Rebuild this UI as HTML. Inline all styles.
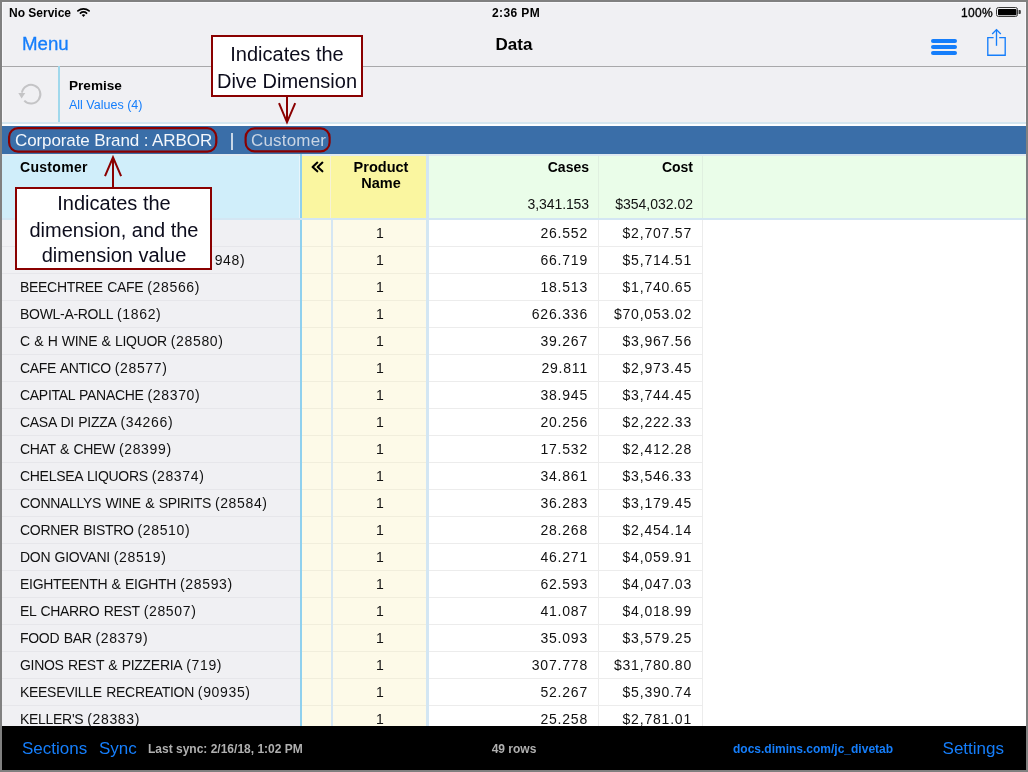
<!DOCTYPE html>
<html><head><meta charset="utf-8"><style>
html,body{margin:0;padding:0;}
body{width:1028px;height:772px;position:relative;overflow:hidden;background:#808080;font-family:"Liberation Sans",sans-serif;}
.t{position:absolute;white-space:nowrap;will-change:transform;}
.r{position:absolute;}
svg{position:absolute;left:0;top:0;}
</style></head><body>
<div class="r" style="left:2px;top:2px;width:1024px;height:768px;background:#f0f0f3;"></div>
<div class="r" style="left:2px;top:2px;width:1024px;height:1px;background:#f8f8fb;"></div>
<div class="r" style="left:2px;top:2px;width:1px;height:768px;background:#f8f8fb;"></div>
<div class="r" style="left:1025px;top:2px;width:1px;height:768px;background:#f8f8fb;"></div>
<div class="t" style="top:7px;font-size:12px;line-height:12px;font-weight:700;color:#000;left:9px;">No Service</div>
<div class="t" style="top:7px;font-size:12px;line-height:12px;font-weight:700;color:#000;letter-spacing:0.4px;left:15.5px;width:1000px;text-align:center;">2:36 PM</div>
<div class="t" style="top:7px;font-size:12px;line-height:12px;font-weight:400;color:#000;letter-spacing:0.3px;left:-7.5px;width:1000px;text-align:right;-webkit-text-stroke:0.35px #000;">100%</div>
<div class="t" style="top:35px;font-size:18.7px;line-height:18.7px;font-weight:400;color:#157efb;left:22px;-webkit-text-stroke:0.3px #157efb;">Menu</div>
<div class="t" style="top:36px;font-size:17px;line-height:17px;font-weight:700;color:#000;left:13.5px;width:1000px;text-align:center;">Data</div>
<div class="r" style="left:2px;top:66px;width:1024px;height:1px;background:#a8a8aa;"></div>
<div class="r" style="left:58px;top:66px;width:2px;height:56px;background:#a0d8ec;"></div>
<div class="t" style="top:79px;font-size:13.6px;line-height:13.6px;font-weight:700;color:#000;left:69px;">Premise</div>
<div class="t" style="top:99px;font-size:12.5px;line-height:12.5px;font-weight:400;color:#157efb;left:69px;">All Values (4)</div>
<div class="r" style="left:2px;top:122px;width:1024px;height:2px;background:#d4e6f0;"></div>
<div class="r" style="left:2px;top:124px;width:1024px;height:2px;background:#fdfeff;"></div>
<div class="r" style="left:2px;top:126px;width:1024px;height:28px;background:#3a6ea8;"></div>
<div class="t" style="top:132px;font-size:17px;line-height:17px;font-weight:400;color:#f4f7fb;letter-spacing:-0.1px;left:15px;">Corporate Brand : ARBOR</div>
<div class="r" style="left:231px;top:133px;width:2px;height:17px;background:#c8d6e6;"></div>
<div class="t" style="top:132px;font-size:17px;line-height:17px;font-weight:400;color:#c9d5e4;letter-spacing:0.18px;left:251px;">Customer</div>
<div class="r" style="left:2px;top:154px;width:1024px;height:2px;background:#dfeaf1;"></div>
<div class="r" style="left:2px;top:156px;width:297px;height:62px;background:#d0eefa;"></div>
<div class="r" style="left:299px;top:156px;width:1px;height:62px;background:#e8f4fa;"></div>
<div class="r" style="left:300px;top:154px;width:2px;height:572px;background:#8fd0ee;"></div>
<div class="r" style="left:302px;top:156px;width:28px;height:62px;background:#faf6a0;"></div>
<div class="r" style="left:330px;top:156px;width:1px;height:62px;background:#f6f3d6;"></div>
<div class="r" style="left:331px;top:156px;width:95px;height:62px;background:#faf6a0;"></div>
<div class="r" style="left:426px;top:154px;width:3px;height:572px;background:#d3e6f3;"></div>
<div class="r" style="left:429px;top:156px;width:597px;height:62px;background:#eafde9;"></div>
<div class="r" style="left:598px;top:156px;width:1px;height:62px;background:#e0f0e0;"></div>
<div class="r" style="left:702px;top:156px;width:1px;height:62px;background:#e0f0e0;"></div>
<div class="r" style="left:2px;top:218px;width:1024px;height:2px;background:#d3e6f3;"></div>
<div class="t" style="top:160px;font-size:14px;line-height:14px;font-weight:700;color:#000;letter-spacing:0.3px;left:20px;">Customer</div>
<div class="t" style="top:160px;font-size:14.5px;line-height:14.5px;font-weight:700;color:#000;left:-119.5px;width:1000px;text-align:center;">Product</div>
<div class="t" style="top:176px;font-size:14.5px;line-height:14.5px;font-weight:700;color:#000;left:-119.5px;width:1000px;text-align:center;">Name</div>
<div class="t" style="top:160px;font-size:14px;line-height:14px;font-weight:700;color:#000;left:-411.5px;width:1000px;text-align:right;">Cases</div>
<div class="t" style="top:160px;font-size:14px;line-height:14px;font-weight:700;color:#000;left:-307.5px;width:1000px;text-align:right;">Cost</div>
<div class="t" style="top:197px;font-size:14px;line-height:14px;font-weight:400;color:#111;letter-spacing:-0.1px;left:-411.5px;width:1000px;text-align:right;">3,341.153</div>
<div class="t" style="top:197px;font-size:14px;line-height:14px;font-weight:400;color:#111;left:-307.5px;width:1000px;text-align:right;">$354,032.02</div>
<div class="r" style="left:2px;top:220px;width:298px;height:506px;background:#f0f0f3;"></div>
<div class="r" style="left:302px;top:220px;width:29px;height:506px;background:#fdfae8;"></div>
<div class="r" style="left:331px;top:220px;width:2px;height:506px;background:#d5e6f3;"></div>
<div class="r" style="left:333px;top:220px;width:93px;height:506px;background:#fdfae8;"></div>
<div class="r" style="left:429px;top:220px;width:597px;height:506px;background:#ffffff;"></div>
<div class="r" style="left:598px;top:220px;width:1px;height:506px;background:#ececec;"></div>
<div class="r" style="left:702px;top:220px;width:1px;height:506px;background:#ececec;"></div>
<div class="r" style="left:2px;top:246px;width:298px;height:1px;background:#e6e6ea;"></div>
<div class="r" style="left:302px;top:246px;width:29px;height:1px;background:#f1eedc;"></div>
<div class="r" style="left:333px;top:246px;width:93px;height:1px;background:#f1eedc;"></div>
<div class="r" style="left:429px;top:246px;width:274px;height:1px;background:#ececec;"></div>
<div class="t" style="top:226px;font-size:14px;line-height:14px;font-weight:400;color:#111;left:20px;"><span style="letter-spacing:-0.3px;word-spacing:0.8px">ARBOR HILL</span> <span style="letter-spacing:0.65px">(28001)</span></div>
<div class="t" style="top:226px;font-size:14px;line-height:14px;font-weight:400;color:#111;left:-120px;width:1000px;text-align:center;">1</div>
<div class="t" style="top:226px;font-size:14px;line-height:14px;font-weight:400;color:#111;letter-spacing:0.8px;left:-412px;width:1000px;text-align:right;">26.552</div>
<div class="t" style="top:226px;font-size:14px;line-height:14px;font-weight:400;color:#111;letter-spacing:0.8px;left:-308px;width:1000px;text-align:right;">$2,707.57</div>
<div class="r" style="left:2px;top:273px;width:298px;height:1px;background:#e6e6ea;"></div>
<div class="r" style="left:302px;top:273px;width:29px;height:1px;background:#f1eedc;"></div>
<div class="r" style="left:333px;top:273px;width:93px;height:1px;background:#f1eedc;"></div>
<div class="r" style="left:429px;top:273px;width:274px;height:1px;background:#ececec;"></div>
<div class="t" style="top:253px;font-size:14px;line-height:14px;font-weight:400;color:#111;left:26px;"><span style="letter-spacing:-0.3px;word-spacing:0.8px">BAY POINT RESTAURANT</span> <span style="letter-spacing:0.65px">(2 948)</span></div>
<div class="t" style="top:253px;font-size:14px;line-height:14px;font-weight:400;color:#111;left:-120px;width:1000px;text-align:center;">1</div>
<div class="t" style="top:253px;font-size:14px;line-height:14px;font-weight:400;color:#111;letter-spacing:0.8px;left:-412px;width:1000px;text-align:right;">66.719</div>
<div class="t" style="top:253px;font-size:14px;line-height:14px;font-weight:400;color:#111;letter-spacing:0.8px;left:-308px;width:1000px;text-align:right;">$5,714.51</div>
<div class="r" style="left:2px;top:300px;width:298px;height:1px;background:#e6e6ea;"></div>
<div class="r" style="left:302px;top:300px;width:29px;height:1px;background:#f1eedc;"></div>
<div class="r" style="left:333px;top:300px;width:93px;height:1px;background:#f1eedc;"></div>
<div class="r" style="left:429px;top:300px;width:274px;height:1px;background:#ececec;"></div>
<div class="t" style="top:280px;font-size:14px;line-height:14px;font-weight:400;color:#111;left:20px;"><span style="letter-spacing:-0.3px;word-spacing:0.8px">BEECHTREE CAFE</span> <span style="letter-spacing:0.65px">(28566)</span></div>
<div class="t" style="top:280px;font-size:14px;line-height:14px;font-weight:400;color:#111;left:-120px;width:1000px;text-align:center;">1</div>
<div class="t" style="top:280px;font-size:14px;line-height:14px;font-weight:400;color:#111;letter-spacing:0.8px;left:-412px;width:1000px;text-align:right;">18.513</div>
<div class="t" style="top:280px;font-size:14px;line-height:14px;font-weight:400;color:#111;letter-spacing:0.8px;left:-308px;width:1000px;text-align:right;">$1,740.65</div>
<div class="r" style="left:2px;top:327px;width:298px;height:1px;background:#e6e6ea;"></div>
<div class="r" style="left:302px;top:327px;width:29px;height:1px;background:#f1eedc;"></div>
<div class="r" style="left:333px;top:327px;width:93px;height:1px;background:#f1eedc;"></div>
<div class="r" style="left:429px;top:327px;width:274px;height:1px;background:#ececec;"></div>
<div class="t" style="top:307px;font-size:14px;line-height:14px;font-weight:400;color:#111;left:20px;"><span style="letter-spacing:-0.3px;word-spacing:0.8px">BOWL-A-ROLL</span> <span style="letter-spacing:0.65px">(1862)</span></div>
<div class="t" style="top:307px;font-size:14px;line-height:14px;font-weight:400;color:#111;left:-120px;width:1000px;text-align:center;">1</div>
<div class="t" style="top:307px;font-size:14px;line-height:14px;font-weight:400;color:#111;letter-spacing:0.8px;left:-412px;width:1000px;text-align:right;">626.336</div>
<div class="t" style="top:307px;font-size:14px;line-height:14px;font-weight:400;color:#111;letter-spacing:0.8px;left:-308px;width:1000px;text-align:right;">$70,053.02</div>
<div class="r" style="left:2px;top:354px;width:298px;height:1px;background:#e6e6ea;"></div>
<div class="r" style="left:302px;top:354px;width:29px;height:1px;background:#f1eedc;"></div>
<div class="r" style="left:333px;top:354px;width:93px;height:1px;background:#f1eedc;"></div>
<div class="r" style="left:429px;top:354px;width:274px;height:1px;background:#ececec;"></div>
<div class="t" style="top:334px;font-size:14px;line-height:14px;font-weight:400;color:#111;left:20px;"><span style="letter-spacing:-0.3px;word-spacing:0.8px">C &amp; H WINE &amp; LIQUOR</span> <span style="letter-spacing:0.65px">(28580)</span></div>
<div class="t" style="top:334px;font-size:14px;line-height:14px;font-weight:400;color:#111;left:-120px;width:1000px;text-align:center;">1</div>
<div class="t" style="top:334px;font-size:14px;line-height:14px;font-weight:400;color:#111;letter-spacing:0.8px;left:-412px;width:1000px;text-align:right;">39.267</div>
<div class="t" style="top:334px;font-size:14px;line-height:14px;font-weight:400;color:#111;letter-spacing:0.8px;left:-308px;width:1000px;text-align:right;">$3,967.56</div>
<div class="r" style="left:2px;top:381px;width:298px;height:1px;background:#e6e6ea;"></div>
<div class="r" style="left:302px;top:381px;width:29px;height:1px;background:#f1eedc;"></div>
<div class="r" style="left:333px;top:381px;width:93px;height:1px;background:#f1eedc;"></div>
<div class="r" style="left:429px;top:381px;width:274px;height:1px;background:#ececec;"></div>
<div class="t" style="top:361px;font-size:14px;line-height:14px;font-weight:400;color:#111;left:20px;"><span style="letter-spacing:-0.3px;word-spacing:0.8px">CAFE ANTICO</span> <span style="letter-spacing:0.65px">(28577)</span></div>
<div class="t" style="top:361px;font-size:14px;line-height:14px;font-weight:400;color:#111;left:-120px;width:1000px;text-align:center;">1</div>
<div class="t" style="top:361px;font-size:14px;line-height:14px;font-weight:400;color:#111;letter-spacing:0.8px;left:-412px;width:1000px;text-align:right;">29.811</div>
<div class="t" style="top:361px;font-size:14px;line-height:14px;font-weight:400;color:#111;letter-spacing:0.8px;left:-308px;width:1000px;text-align:right;">$2,973.45</div>
<div class="r" style="left:2px;top:408px;width:298px;height:1px;background:#e6e6ea;"></div>
<div class="r" style="left:302px;top:408px;width:29px;height:1px;background:#f1eedc;"></div>
<div class="r" style="left:333px;top:408px;width:93px;height:1px;background:#f1eedc;"></div>
<div class="r" style="left:429px;top:408px;width:274px;height:1px;background:#ececec;"></div>
<div class="t" style="top:388px;font-size:14px;line-height:14px;font-weight:400;color:#111;left:20px;"><span style="letter-spacing:-0.3px;word-spacing:0.8px">CAPITAL PANACHE</span> <span style="letter-spacing:0.65px">(28370)</span></div>
<div class="t" style="top:388px;font-size:14px;line-height:14px;font-weight:400;color:#111;left:-120px;width:1000px;text-align:center;">1</div>
<div class="t" style="top:388px;font-size:14px;line-height:14px;font-weight:400;color:#111;letter-spacing:0.8px;left:-412px;width:1000px;text-align:right;">38.945</div>
<div class="t" style="top:388px;font-size:14px;line-height:14px;font-weight:400;color:#111;letter-spacing:0.8px;left:-308px;width:1000px;text-align:right;">$3,744.45</div>
<div class="r" style="left:2px;top:435px;width:298px;height:1px;background:#e6e6ea;"></div>
<div class="r" style="left:302px;top:435px;width:29px;height:1px;background:#f1eedc;"></div>
<div class="r" style="left:333px;top:435px;width:93px;height:1px;background:#f1eedc;"></div>
<div class="r" style="left:429px;top:435px;width:274px;height:1px;background:#ececec;"></div>
<div class="t" style="top:415px;font-size:14px;line-height:14px;font-weight:400;color:#111;left:20px;"><span style="letter-spacing:-0.3px;word-spacing:0.8px">CASA DI PIZZA</span> <span style="letter-spacing:0.65px">(34266)</span></div>
<div class="t" style="top:415px;font-size:14px;line-height:14px;font-weight:400;color:#111;left:-120px;width:1000px;text-align:center;">1</div>
<div class="t" style="top:415px;font-size:14px;line-height:14px;font-weight:400;color:#111;letter-spacing:0.8px;left:-412px;width:1000px;text-align:right;">20.256</div>
<div class="t" style="top:415px;font-size:14px;line-height:14px;font-weight:400;color:#111;letter-spacing:0.8px;left:-308px;width:1000px;text-align:right;">$2,222.33</div>
<div class="r" style="left:2px;top:462px;width:298px;height:1px;background:#e6e6ea;"></div>
<div class="r" style="left:302px;top:462px;width:29px;height:1px;background:#f1eedc;"></div>
<div class="r" style="left:333px;top:462px;width:93px;height:1px;background:#f1eedc;"></div>
<div class="r" style="left:429px;top:462px;width:274px;height:1px;background:#ececec;"></div>
<div class="t" style="top:442px;font-size:14px;line-height:14px;font-weight:400;color:#111;left:20px;"><span style="letter-spacing:-0.3px;word-spacing:0.8px">CHAT &amp; CHEW</span> <span style="letter-spacing:0.65px">(28399)</span></div>
<div class="t" style="top:442px;font-size:14px;line-height:14px;font-weight:400;color:#111;left:-120px;width:1000px;text-align:center;">1</div>
<div class="t" style="top:442px;font-size:14px;line-height:14px;font-weight:400;color:#111;letter-spacing:0.8px;left:-412px;width:1000px;text-align:right;">17.532</div>
<div class="t" style="top:442px;font-size:14px;line-height:14px;font-weight:400;color:#111;letter-spacing:0.8px;left:-308px;width:1000px;text-align:right;">$2,412.28</div>
<div class="r" style="left:2px;top:489px;width:298px;height:1px;background:#e6e6ea;"></div>
<div class="r" style="left:302px;top:489px;width:29px;height:1px;background:#f1eedc;"></div>
<div class="r" style="left:333px;top:489px;width:93px;height:1px;background:#f1eedc;"></div>
<div class="r" style="left:429px;top:489px;width:274px;height:1px;background:#ececec;"></div>
<div class="t" style="top:469px;font-size:14px;line-height:14px;font-weight:400;color:#111;left:20px;"><span style="letter-spacing:-0.3px;word-spacing:0.8px">CHELSEA LIQUORS</span> <span style="letter-spacing:0.65px">(28374)</span></div>
<div class="t" style="top:469px;font-size:14px;line-height:14px;font-weight:400;color:#111;left:-120px;width:1000px;text-align:center;">1</div>
<div class="t" style="top:469px;font-size:14px;line-height:14px;font-weight:400;color:#111;letter-spacing:0.8px;left:-412px;width:1000px;text-align:right;">34.861</div>
<div class="t" style="top:469px;font-size:14px;line-height:14px;font-weight:400;color:#111;letter-spacing:0.8px;left:-308px;width:1000px;text-align:right;">$3,546.33</div>
<div class="r" style="left:2px;top:516px;width:298px;height:1px;background:#e6e6ea;"></div>
<div class="r" style="left:302px;top:516px;width:29px;height:1px;background:#f1eedc;"></div>
<div class="r" style="left:333px;top:516px;width:93px;height:1px;background:#f1eedc;"></div>
<div class="r" style="left:429px;top:516px;width:274px;height:1px;background:#ececec;"></div>
<div class="t" style="top:496px;font-size:14px;line-height:14px;font-weight:400;color:#111;left:20px;"><span style="letter-spacing:-0.3px;word-spacing:0.8px">CONNALLYS WINE &amp; SPIRITS</span> <span style="letter-spacing:0.65px">(28584)</span></div>
<div class="t" style="top:496px;font-size:14px;line-height:14px;font-weight:400;color:#111;left:-120px;width:1000px;text-align:center;">1</div>
<div class="t" style="top:496px;font-size:14px;line-height:14px;font-weight:400;color:#111;letter-spacing:0.8px;left:-412px;width:1000px;text-align:right;">36.283</div>
<div class="t" style="top:496px;font-size:14px;line-height:14px;font-weight:400;color:#111;letter-spacing:0.8px;left:-308px;width:1000px;text-align:right;">$3,179.45</div>
<div class="r" style="left:2px;top:543px;width:298px;height:1px;background:#e6e6ea;"></div>
<div class="r" style="left:302px;top:543px;width:29px;height:1px;background:#f1eedc;"></div>
<div class="r" style="left:333px;top:543px;width:93px;height:1px;background:#f1eedc;"></div>
<div class="r" style="left:429px;top:543px;width:274px;height:1px;background:#ececec;"></div>
<div class="t" style="top:523px;font-size:14px;line-height:14px;font-weight:400;color:#111;left:20px;"><span style="letter-spacing:-0.3px;word-spacing:0.8px">CORNER BISTRO</span> <span style="letter-spacing:0.65px">(28510)</span></div>
<div class="t" style="top:523px;font-size:14px;line-height:14px;font-weight:400;color:#111;left:-120px;width:1000px;text-align:center;">1</div>
<div class="t" style="top:523px;font-size:14px;line-height:14px;font-weight:400;color:#111;letter-spacing:0.8px;left:-412px;width:1000px;text-align:right;">28.268</div>
<div class="t" style="top:523px;font-size:14px;line-height:14px;font-weight:400;color:#111;letter-spacing:0.8px;left:-308px;width:1000px;text-align:right;">$2,454.14</div>
<div class="r" style="left:2px;top:570px;width:298px;height:1px;background:#e6e6ea;"></div>
<div class="r" style="left:302px;top:570px;width:29px;height:1px;background:#f1eedc;"></div>
<div class="r" style="left:333px;top:570px;width:93px;height:1px;background:#f1eedc;"></div>
<div class="r" style="left:429px;top:570px;width:274px;height:1px;background:#ececec;"></div>
<div class="t" style="top:550px;font-size:14px;line-height:14px;font-weight:400;color:#111;left:20px;"><span style="letter-spacing:-0.3px;word-spacing:0.8px">DON GIOVANI</span> <span style="letter-spacing:0.65px">(28519)</span></div>
<div class="t" style="top:550px;font-size:14px;line-height:14px;font-weight:400;color:#111;left:-120px;width:1000px;text-align:center;">1</div>
<div class="t" style="top:550px;font-size:14px;line-height:14px;font-weight:400;color:#111;letter-spacing:0.8px;left:-412px;width:1000px;text-align:right;">46.271</div>
<div class="t" style="top:550px;font-size:14px;line-height:14px;font-weight:400;color:#111;letter-spacing:0.8px;left:-308px;width:1000px;text-align:right;">$4,059.91</div>
<div class="r" style="left:2px;top:597px;width:298px;height:1px;background:#e6e6ea;"></div>
<div class="r" style="left:302px;top:597px;width:29px;height:1px;background:#f1eedc;"></div>
<div class="r" style="left:333px;top:597px;width:93px;height:1px;background:#f1eedc;"></div>
<div class="r" style="left:429px;top:597px;width:274px;height:1px;background:#ececec;"></div>
<div class="t" style="top:577px;font-size:14px;line-height:14px;font-weight:400;color:#111;left:20px;"><span style="letter-spacing:-0.3px;word-spacing:0.8px">EIGHTEENTH &amp; EIGHTH</span> <span style="letter-spacing:0.65px">(28593)</span></div>
<div class="t" style="top:577px;font-size:14px;line-height:14px;font-weight:400;color:#111;left:-120px;width:1000px;text-align:center;">1</div>
<div class="t" style="top:577px;font-size:14px;line-height:14px;font-weight:400;color:#111;letter-spacing:0.8px;left:-412px;width:1000px;text-align:right;">62.593</div>
<div class="t" style="top:577px;font-size:14px;line-height:14px;font-weight:400;color:#111;letter-spacing:0.8px;left:-308px;width:1000px;text-align:right;">$4,047.03</div>
<div class="r" style="left:2px;top:624px;width:298px;height:1px;background:#e6e6ea;"></div>
<div class="r" style="left:302px;top:624px;width:29px;height:1px;background:#f1eedc;"></div>
<div class="r" style="left:333px;top:624px;width:93px;height:1px;background:#f1eedc;"></div>
<div class="r" style="left:429px;top:624px;width:274px;height:1px;background:#ececec;"></div>
<div class="t" style="top:604px;font-size:14px;line-height:14px;font-weight:400;color:#111;left:20px;"><span style="letter-spacing:-0.3px;word-spacing:0.8px">EL CHARRO REST</span> <span style="letter-spacing:0.65px">(28507)</span></div>
<div class="t" style="top:604px;font-size:14px;line-height:14px;font-weight:400;color:#111;left:-120px;width:1000px;text-align:center;">1</div>
<div class="t" style="top:604px;font-size:14px;line-height:14px;font-weight:400;color:#111;letter-spacing:0.8px;left:-412px;width:1000px;text-align:right;">41.087</div>
<div class="t" style="top:604px;font-size:14px;line-height:14px;font-weight:400;color:#111;letter-spacing:0.8px;left:-308px;width:1000px;text-align:right;">$4,018.99</div>
<div class="r" style="left:2px;top:651px;width:298px;height:1px;background:#e6e6ea;"></div>
<div class="r" style="left:302px;top:651px;width:29px;height:1px;background:#f1eedc;"></div>
<div class="r" style="left:333px;top:651px;width:93px;height:1px;background:#f1eedc;"></div>
<div class="r" style="left:429px;top:651px;width:274px;height:1px;background:#ececec;"></div>
<div class="t" style="top:631px;font-size:14px;line-height:14px;font-weight:400;color:#111;left:20px;"><span style="letter-spacing:-0.3px;word-spacing:0.8px">FOOD BAR</span> <span style="letter-spacing:0.65px">(28379)</span></div>
<div class="t" style="top:631px;font-size:14px;line-height:14px;font-weight:400;color:#111;left:-120px;width:1000px;text-align:center;">1</div>
<div class="t" style="top:631px;font-size:14px;line-height:14px;font-weight:400;color:#111;letter-spacing:0.8px;left:-412px;width:1000px;text-align:right;">35.093</div>
<div class="t" style="top:631px;font-size:14px;line-height:14px;font-weight:400;color:#111;letter-spacing:0.8px;left:-308px;width:1000px;text-align:right;">$3,579.25</div>
<div class="r" style="left:2px;top:678px;width:298px;height:1px;background:#e6e6ea;"></div>
<div class="r" style="left:302px;top:678px;width:29px;height:1px;background:#f1eedc;"></div>
<div class="r" style="left:333px;top:678px;width:93px;height:1px;background:#f1eedc;"></div>
<div class="r" style="left:429px;top:678px;width:274px;height:1px;background:#ececec;"></div>
<div class="t" style="top:658px;font-size:14px;line-height:14px;font-weight:400;color:#111;left:20px;"><span style="letter-spacing:-0.3px;word-spacing:0.8px">GINOS REST &amp; PIZZERIA</span> <span style="letter-spacing:0.65px">(719)</span></div>
<div class="t" style="top:658px;font-size:14px;line-height:14px;font-weight:400;color:#111;left:-120px;width:1000px;text-align:center;">1</div>
<div class="t" style="top:658px;font-size:14px;line-height:14px;font-weight:400;color:#111;letter-spacing:0.8px;left:-412px;width:1000px;text-align:right;">307.778</div>
<div class="t" style="top:658px;font-size:14px;line-height:14px;font-weight:400;color:#111;letter-spacing:0.8px;left:-308px;width:1000px;text-align:right;">$31,780.80</div>
<div class="r" style="left:2px;top:705px;width:298px;height:1px;background:#e6e6ea;"></div>
<div class="r" style="left:302px;top:705px;width:29px;height:1px;background:#f1eedc;"></div>
<div class="r" style="left:333px;top:705px;width:93px;height:1px;background:#f1eedc;"></div>
<div class="r" style="left:429px;top:705px;width:274px;height:1px;background:#ececec;"></div>
<div class="t" style="top:685px;font-size:14px;line-height:14px;font-weight:400;color:#111;left:20px;"><span style="letter-spacing:-0.3px;word-spacing:0.8px">KEESEVILLE RECREATION</span> <span style="letter-spacing:0.65px">(90935)</span></div>
<div class="t" style="top:685px;font-size:14px;line-height:14px;font-weight:400;color:#111;left:-120px;width:1000px;text-align:center;">1</div>
<div class="t" style="top:685px;font-size:14px;line-height:14px;font-weight:400;color:#111;letter-spacing:0.8px;left:-412px;width:1000px;text-align:right;">52.267</div>
<div class="t" style="top:685px;font-size:14px;line-height:14px;font-weight:400;color:#111;letter-spacing:0.8px;left:-308px;width:1000px;text-align:right;">$5,390.74</div>
<div class="t" style="top:712px;font-size:14px;line-height:14px;font-weight:400;color:#111;left:20px;"><span style="letter-spacing:-0.3px;word-spacing:0.8px">KELLER'S</span> <span style="letter-spacing:0.65px">(28383)</span></div>
<div class="t" style="top:712px;font-size:14px;line-height:14px;font-weight:400;color:#111;left:-120px;width:1000px;text-align:center;">1</div>
<div class="t" style="top:712px;font-size:14px;line-height:14px;font-weight:400;color:#111;letter-spacing:0.8px;left:-412px;width:1000px;text-align:right;">25.258</div>
<div class="t" style="top:712px;font-size:14px;line-height:14px;font-weight:400;color:#111;letter-spacing:0.8px;left:-308px;width:1000px;text-align:right;">$2,781.01</div>
<div class="r" style="left:2px;top:726px;width:1024px;height:44px;background:#000;"></div>
<div class="t" style="top:740px;font-size:17px;line-height:17px;font-weight:400;color:#157efb;left:22px;">Sections</div>
<div class="t" style="top:740px;font-size:17px;line-height:17px;font-weight:400;color:#157efb;left:98.5px;">Sync</div>
<div class="t" style="top:743px;font-size:12px;line-height:12px;font-weight:700;color:#b0b0b0;left:147.5px;">Last sync: 2/16/18, 1:02 PM</div>
<div class="t" style="top:743px;font-size:12px;line-height:12px;font-weight:700;color:#b0b0b0;left:14px;width:1000px;text-align:center;">49 rows</div>
<div class="t" style="top:743px;font-size:12px;line-height:12px;font-weight:700;color:#157efb;left:732.5px;">docs.dimins.com/jc_divetab</div>
<div class="t" style="top:740px;font-size:17px;line-height:17px;font-weight:400;color:#157efb;left:4px;width:1000px;text-align:right;">Settings</div>
<svg width="1028" height="772" viewBox="0 0 1028 772">
<!-- wifi -->
<path d="M77.9 10.9 A8.84 8.84 0 0 1 89.1 10.9" stroke="#000" stroke-width="1.75" fill="none" stroke-linecap="round"/>
<path d="M80.45 13.2 A4.47 4.47 0 0 1 86.55 13.2" stroke="#000" stroke-width="1.75" fill="none" stroke-linecap="round"/>
<path d="M83.5 17.1 L81.7 14.9 A2.9 2.9 0 0 1 85.3 14.9 Z" fill="#000"/>
<!-- battery -->
<rect x="996.5" y="7.5" width="21" height="9" rx="2" ry="2" fill="none" stroke="#3a3a3a" stroke-width="1"/>
<rect x="998" y="9" width="18.5" height="6.2" rx="0.8" fill="#000"/>
<path d="M1018.6 10 h1.2 a1 1 0 0 1 1 1 v2 a1 1 0 0 1 -1 1 h-1.2 z" fill="#3a3a3a"/>
<!-- hamburger -->
<g stroke="#157efb" stroke-width="4" stroke-linecap="round">
<line x1="933" y1="41" x2="955" y2="41"/><line x1="933" y1="47" x2="955" y2="47"/><line x1="933" y1="53" x2="955" y2="53"/>
</g>
<!-- share -->
<g stroke="#157efb" stroke-width="1.35" fill="none">
<path d="M993.6 37.6 H987.8 V55.2 H1005.2 V37.6 H999.2"/>
<line x1="996.5" y1="29.8" x2="996.5" y2="45.8"/>
<path d="M992.2 34 L996.5 29.6 L1000.8 34"/>
</g>
<!-- chevrons -->
<g stroke="#000" stroke-width="2.1" fill="none" stroke-linecap="round" stroke-linejoin="round">
<path d="M317.3 162.6 L312.6 167 L317.3 171.3"/><path d="M322.4 162.6 L317.7 167 L322.4 171.3"/>
</g>
<!-- refresh -->
<path d="M24.3 100.6 A9.3 9.3 0 1 0 21.9 92.6" stroke="#c4c4c6" stroke-width="2" fill="none"/>
<path d="M18.3 93.1 L25.3 93.1 L21.6 98.4 Z" fill="#c4c4c6"/>
<!-- annotations: rounded rects in blue bar -->
<rect x="9.1" y="128.1" width="207.2" height="23.5" rx="9" ry="9" fill="none" stroke="#8a0000" stroke-width="2.2"/>
<rect x="245.6" y="128.4" width="84" height="23" rx="9" ry="9" fill="none" stroke="#8a0000" stroke-width="2.2"/>
<!-- arrow up to brand -->
<line x1="113" y1="158" x2="113" y2="187" stroke="#8a0000" stroke-width="2"/>
<path d="M105 176.2 L113 157.3 L121.1 176.2" stroke="#8a0000" stroke-width="2" fill="none"/>
<!-- arrow down to customer -->
<line x1="287" y1="97" x2="287" y2="121" stroke="#8a0000" stroke-width="2"/>
<path d="M279 103.2 L287 122.3 L295.2 103.2" stroke="#8a0000" stroke-width="2" fill="none"/>
</svg>
<div class="r" style="left:15px;top:187px;width:193px;height:79px;background:#fff;border:2px solid #8a0000;"></div>
<div class="r" style="left:211px;top:35px;width:148px;height:58px;background:#fff;border:2px solid #8a0000;"></div>
<div class="t" style="top:193px;font-size:20px;line-height:20px;font-weight:400;color:#0c0c1c;left:-386.5px;width:1000px;text-align:center;">Indicates the</div>
<div class="t" style="top:220px;font-size:20px;line-height:20px;font-weight:400;color:#0c0c1c;left:-386.5px;width:1000px;text-align:center;">dimension, and the</div>
<div class="t" style="top:245px;font-size:20px;line-height:20px;font-weight:400;color:#0c0c1c;left:-386.5px;width:1000px;text-align:center;">dimension value</div>
<div class="t" style="top:44px;font-size:20px;line-height:20px;font-weight:400;color:#0c0c1c;left:-213px;width:1000px;text-align:center;">Indicates the</div>
<div class="t" style="top:71px;font-size:20px;line-height:20px;font-weight:400;color:#0c0c1c;left:-213px;width:1000px;text-align:center;">Dive Dimension</div>
</body></html>
